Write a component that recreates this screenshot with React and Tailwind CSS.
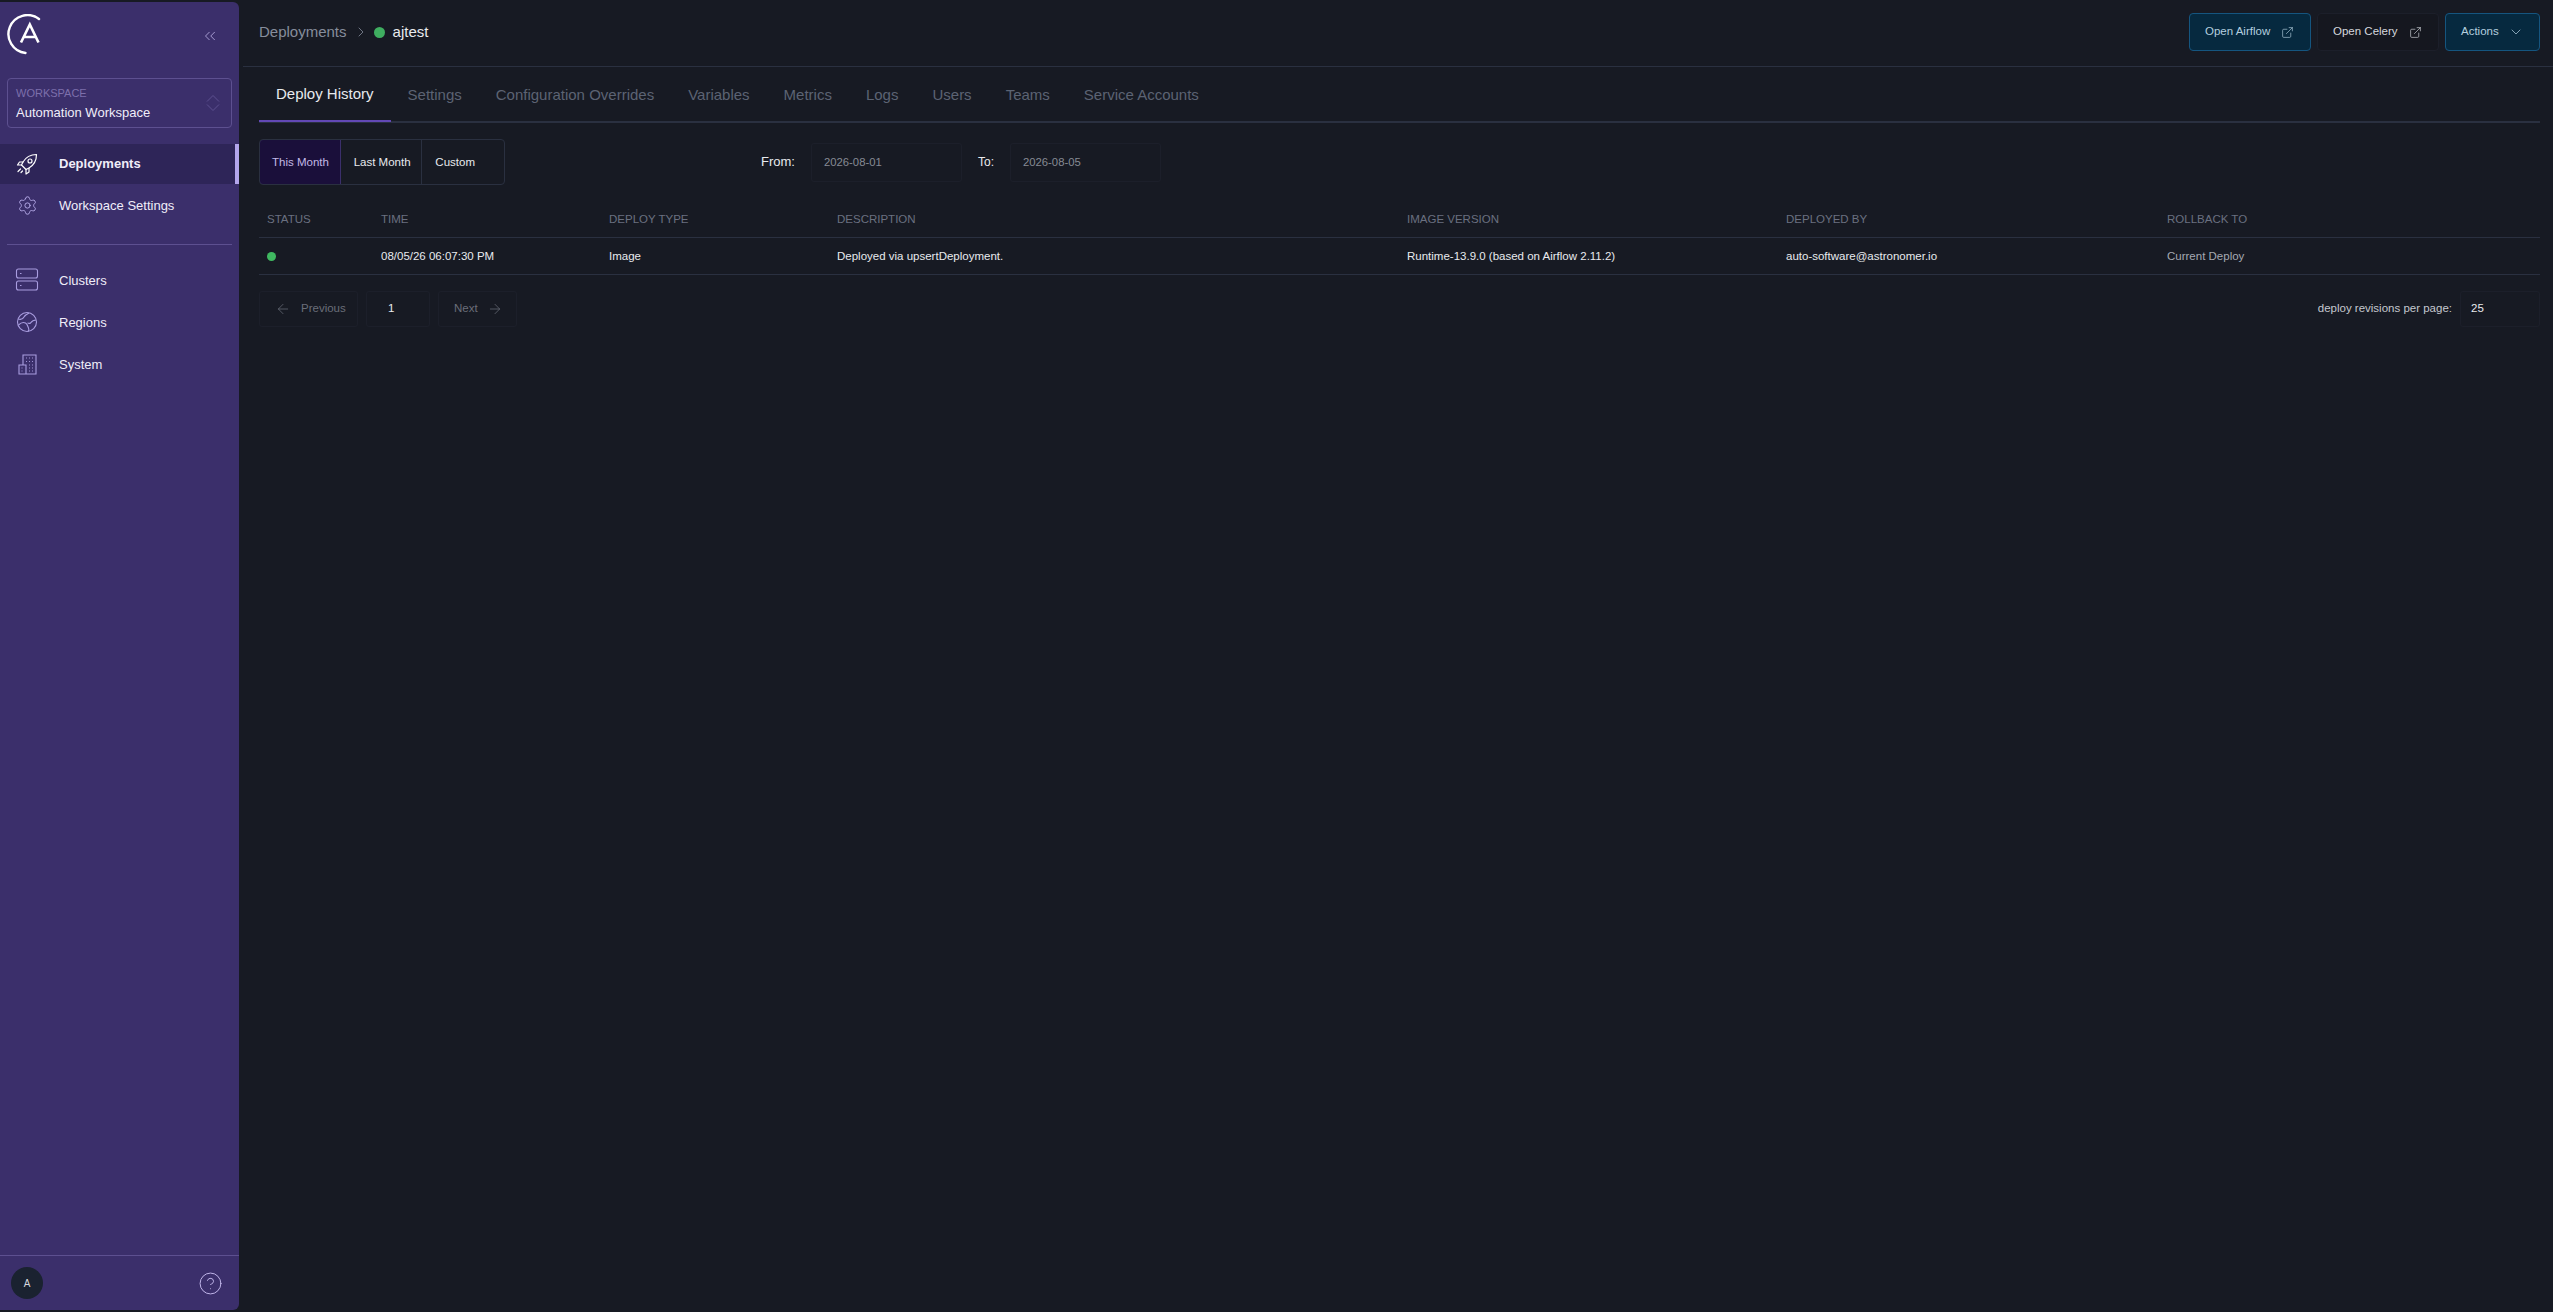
import React from 'react';
import { ArrowLeft, ArrowRight, ChevronDown, ChevronRight, ChevronsLeft, ExternalLink, HelpCircle, Settings } from 'lucide-react';

const tabs = ['Deploy History', 'Settings', 'Configuration Overrides', 'Variables', 'Metrics', 'Logs', 'Users', 'Teams', 'Service Accounts'];
const columns = ['Status', 'Time', 'Deploy Type', 'Description', 'Image Version', 'Deployed By', 'Rollback To'];
const colsClass = 'grid grid-cols-[117px_228px_228px_570px_379px_381px_377px]';

function Logo() {
  return (
    <svg width="44" height="48" viewBox="0 0 44 48" fill="none" stroke="white" className="block">
      <path d="M32 5 A19 19 0 1 0 18.500 39" strokeWidth="2.4" strokeLinecap="round" />
      <path d="M14 28.500 L22.800 10.500 L31.500 28.500 M17 23 H29" strokeWidth="2.6" />
    </svg>
  );
}

function RocketIcon() {
  return (
    <svg width="24" height="24" viewBox="0 0 24 24" fill="none" stroke="white" strokeWidth="1.2" strokeLinejoin="round" strokeLinecap="round">
      <path d="M21.500 2.500C16 2.500 11 5 8 10L6.500 13L11 17.500L14 16C19 13 21.500 8 21.500 2.500Z" />
      <circle cx="15" cy="9" r="2" />
      <path d="M8 10H4.500L2.500 13H6.500M14 16V20L11 22V17.500M5.500 17L3 19.500M7.500 19L6 20.500" />
    </svg>
  );
}

function ClustersIcon() {
  return (
    <svg width="24" height="24" viewBox="0 0 24 24" fill="none" stroke="#a99de0" strokeWidth="1.1">
      <rect x="1.500" y="1" width="21" height="9" rx="2" />
      <rect x="1.500" y="13" width="21" height="9" rx="2" />
      <path d="M5 5.500h1.500M5 17.500h1.500" />
    </svg>
  );
}

function RegionsIcon() {
  return (
    <svg width="24" height="24" viewBox="0 0 24 24" fill="none" stroke="#a99de0" strokeWidth="1.1">
      <circle cx="12" cy="12" r="9.500" />
      <path d="M3 9c3 1 5 0 6-2s3-3 5-4M3.500 15c2-2 5-3 7-2s2 3 3 5 0 3-.5 3.500M21 10c-2 0-4 1-5.500 3-1 1-2 0-3 0" />
    </svg>
  );
}

function SystemIcon() {
  return (
    <svg width="24" height="24" viewBox="0 0 24 24" fill="none" stroke="#a99de0" strokeWidth="1.1">
      <path d="M8 13V3H21V22H4V13H11V22" />
      <path d="M11 6h1M14 6h1M17 6h1M11 9.500h1M14 9.500h1M17 9.500h1M14 13h1M17 13h1M14 16h1M17 16h1M14 19h1M17 19h1M6.500 16h1M6.500 19h1" strokeWidth="0.9" />
    </svg>
  );
}

function UpDownIcon() {
  return (
    <svg width="14" height="18" viewBox="0 0 14 18" fill="none" stroke="#5d5090" strokeWidth="1">
      <path d="M1 7.500L7 1.500L13 7.500M1 10.500L7 16.500L13 10.500" />
    </svg>
  );
}

function NavItem({ icon, label, active }) {
  return (
    <div className={`flex items-center pl-[15px] text-[13px] text-[#f0edf9] ${active ? 'h-[40px] bg-[#2e2558] font-bold border-r-4 border-[#b3a5ec]' : 'h-[42px]'}`}>
      <span className="w-[24px] h-[24px] mr-[20px] flex items-center justify-center">{icon}</span>
      <span className={active ? '' : 'pt-[1px]'}>{label}</span>
    </div>
  );
}

function Sidebar() {
  return (
    <aside className="w-[239px] h-full bg-[#3b2f6b] rounded-r-md flex flex-col shrink-0">
      <div className="flex items-start justify-between h-[76px] pl-[7px] pr-[20px] pt-[12px]">
        <Logo />
        <ChevronsLeft size={18} strokeWidth={1} className="text-[#c7bdf0] mt-[13px]" />
      </div>
      <div className="mx-[7px] h-[50px] border border-[#5d5090] rounded-[4px] pl-[8px] pr-[11px] flex items-center justify-between">
        <div className="pt-[1px]">
          <div className="text-[11px] leading-[16px] text-[#7d70ab]">WORKSPACE</div>
          <div className="text-[13px] leading-[20px] mt-[2px] text-[#f0edf9]">Automation Workspace</div>
        </div>
        <UpDownIcon />
      </div>
      <div className="mt-[16px]">
        <NavItem active label="Deployments" icon={<RocketIcon />} />
        <NavItem label="Workspace Settings" icon={<Settings size={21} strokeWidth={1.1} className="text-[#b3a8e6]" />} />
      </div>
      <div className="mx-[7px] mt-[18px] mb-[14px] border-t border-[#5d5090]" />
      <div>
        <NavItem label="Clusters" icon={<ClustersIcon />} />
        <NavItem label="Regions" icon={<RegionsIcon />} />
        <NavItem label="System" icon={<SystemIcon />} />
      </div>
      <div className="mt-auto border-t border-[#5d5090] h-[55px] flex items-center justify-between pl-[11px] pr-[16px]">
        <div className="w-[32px] h-[32px] rounded-full bg-[#1a2230] text-[#d5d8de] text-[10px] flex items-center justify-center">A</div>
        <HelpCircle size={25} strokeWidth={0.9} className="text-[#c7bdf0]" />
      </div>
    </aside>
  );
}

function HeaderButton({ label, icon, accent, className }) {
  return (
    <button className={`h-[38px] border rounded-[4px] flex items-center text-[11.500px] ${accent ? 'bg-[#06293f] border-[#15557f] text-[#b4cfdf]' : 'bg-[#15171f] border-[#1c1f2a] text-[#d5d8de]'} ${className}`}>
      {label}
      {icon}
    </button>
  );
}

function DateField({ label, value, className }) {
  return (
    <div className={`flex items-center ${className}`}>
      <span className="text-[#e8eaee] text-[13px]">{label}</span>
      <div className="w-[151px] h-[39px] border border-[#1c1f2a] rounded-[3px] pl-[12px] flex items-center text-[11.300px] text-[#868a94] ml-[16px]">{value}</div>
    </div>
  );
}

function Pagination() {
  return (
    <div className="flex items-center justify-between mt-[16px] text-[11.500px]">
      <div className="flex items-center">
        <div className="w-[99px] h-[36px] border border-[#1c1f2a] rounded-[3px] flex items-center pl-[15px] text-[#6a6e79]">
          <ArrowLeft size={16} strokeWidth={1.1} className="mr-[10px]" /> Previous
        </div>
        <div className="w-[64px] h-[36px] border border-[#1c1f2a] rounded-[3px] flex items-center pl-[21px] ml-[8px] text-[#e8eaee]">1</div>
        <div className="w-[79px] h-[36px] border border-[#1c1f2a] rounded-[3px] flex items-center pl-[15px] ml-[8px] text-[#6a6e79]">
          Next <ArrowRight size={16} strokeWidth={1.1} className="ml-[9px]" />
        </div>
      </div>
      <div className="flex items-center">
        <span className="text-[#c5c8cf]">deploy revisions per page:</span>
        <div className="w-[80px] h-[36px] border border-[#1c1f2a] rounded-[3px] flex items-center pl-[10px] ml-[8px] text-[#e8eaee]">25</div>
      </div>
    </div>
  );
}

export default function App() {
  return (
    <div className="h-[1312px] w-full bg-[#171a23] flex py-[2px] font-['Liberation_Sans',sans-serif] antialiased overflow-hidden">
      <Sidebar />
      <main className="flex-1 pl-[4px] min-w-0">
        <header className="h-[65px] border-b border-[#2a3040] flex items-center justify-between pb-[4px] pl-[16px] pr-[13px]">
          <div className="flex items-center text-[15px]">
            <span className="text-[#868d9c]">Deployments</span>
            <ChevronRight size={16} strokeWidth={1.2} className="text-[#868d9c] ml-[6px] mr-[5px]" />
            <span className="w-[11px] h-[11px] rounded-full bg-[#3fae60] mr-[8px]" />
            <span className="text-[#e8eaee]">ajtest</span>
          </div>
          <div className="flex items-center gap-[6px]">
            <HeaderButton accent label="Open Airflow" className="w-[122px] pl-[15px]" icon={<ExternalLink size={13} strokeWidth={1.2} className="ml-[11px]" />} />
            <HeaderButton label="Open Celery" className="w-[122px] pl-[15px]" icon={<ExternalLink size={13} strokeWidth={1.2} className="ml-[11px]" />} />
            <HeaderButton accent label="Actions" className="w-[95px] pl-[15px]" icon={<ChevronDown size={16} strokeWidth={1.1} className="ml-[9px]" />} />
          </div>
        </header>
        <div className="pl-[16px] pr-[13px]">
          <nav className="flex h-[56px] border-b-2 border-[#2a3040] text-[15px]">
            {tabs.map((t, i) => (
              <div key={t} className={`px-[17px] flex items-center h-[55px] pt-[2px] ${i === 0 ? 'text-[#e8eaee] border-b-2 border-[#6248b5]' : 'text-[#5c6373]'}`}>{t}</div>
            ))}
          </nav>
          <div className="flex items-center mt-[16px]">
            <div className="flex w-[246px] h-[46px] border border-[#2a3040] rounded-[4px] text-[11.500px] overflow-hidden">
              <div className="w-[82px] bg-[#1a0f3a] border border-[#3b2f6b] rounded-l-[4px] -m-px mr-0 text-[#c2b8e6] flex items-center pl-[12px] pt-[1px]">This Month</div>
              <div className="w-[82px] border-r border-[#2a3040] text-[#e8eaee] flex items-center pl-[13px] pt-[1px]">Last Month</div>
              <div className="w-[82px] text-[#e8eaee] flex items-center pl-[13px] pt-[1px]">Custom</div>
            </div>
            <DateField label="From:" value="2026-08-01" className="ml-[256px]" />
            <DateField label="To:" value="2026-08-05" className="ml-[16px] [&>span]:text-[12px]" />
          </div>
          <div className="mt-[19px] text-[11.500px]">
            <div className={`${colsClass} h-[34px] items-center border-b border-[#2a3040] pb-[2px] text-[#6a7080]`}>
              {columns.map((c, i) => <div key={c} className={`uppercase ${i === 0 ? 'pl-[8px]' : 'pl-[5px]'}`}>{c}</div>)}
            </div>
            <div className={`${colsClass} h-[37px] items-center border-b border-[#2a3040] pt-[1px] text-[#e8eaee]`}>
              <div className="pl-[8px]"><div className="w-[9px] h-[9px] rounded-full bg-[#3fb860] mb-[1px]" /></div>
              <div className="pl-[5px]">08/05/26 06:07:30 PM</div>
              <div className="pl-[5px]">Image</div>
              <div className="pl-[5px]">Deployed via upsertDeployment.</div>
              <div className="pl-[5px]">Runtime-13.9.0 (based on Airflow 2.11.2)</div>
              <div className="pl-[5px]">auto-software@astronomer.io</div>
              <div className="pl-[5px] text-[#a5a9b2]">Current Deploy</div>
            </div>
          </div>
          <Pagination />
        </div>
      </main>
    </div>
  );
}
